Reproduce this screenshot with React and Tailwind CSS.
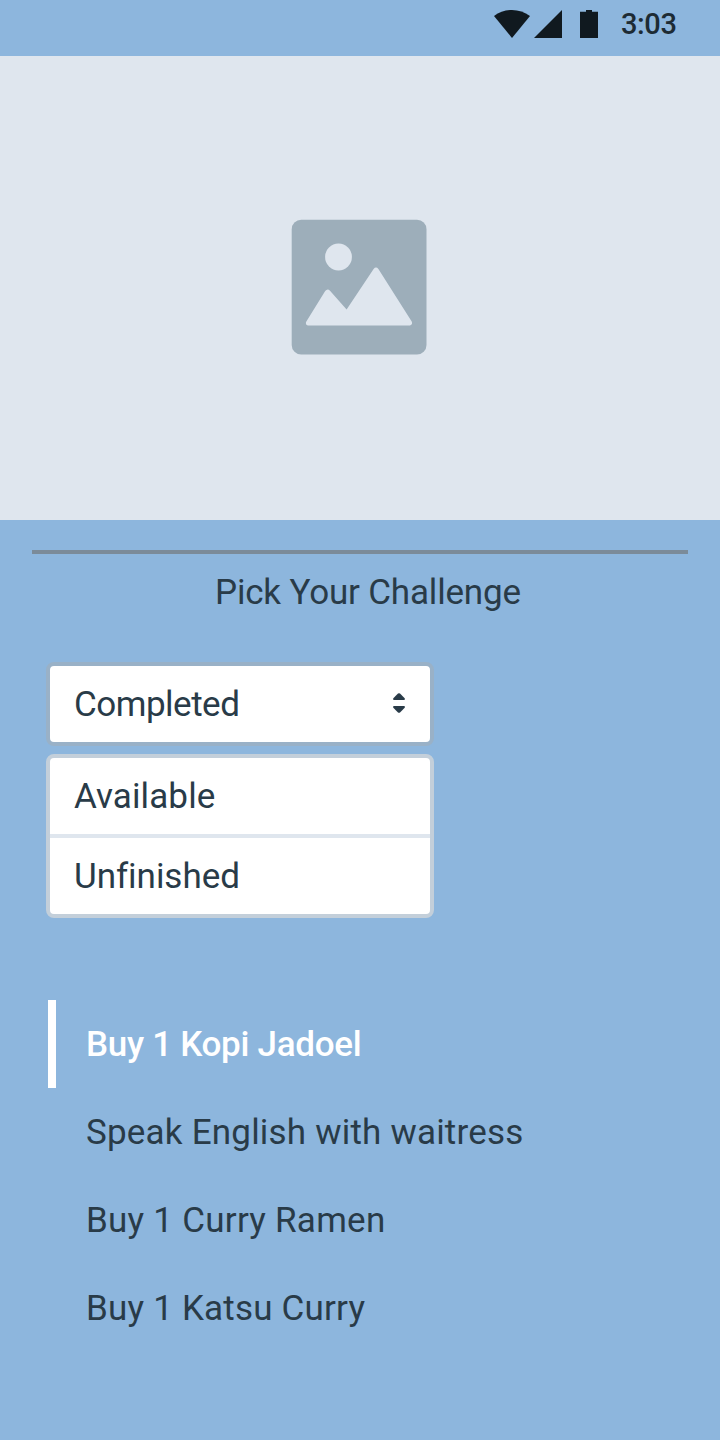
function StatusBar() {
  return (
    <header className="flex h-14 shrink-0 items-center text-[#10191f]">
      <svg className="ml-[492px] h-14 w-[112px] shrink-0" viewBox="492 0 112 56" fill="currentColor">
        <path d="M494 16C504.500 8 519.500 8 530 16L512 38Z" />
        <path d="M562 10V38H534Z" />
        <path d="M586 10H592V11.700H598V38H580V11.700H586Z" />
      </svg>
      <span className="ml-[17px] -mt-2 text-[29px] font-medium leading-10 tracking-[-0.4px] text-[#1d2b34]">3:03</span>
    </header>
  );
}

function ImagePlaceholder() {
  return (
    <div className="h-[464px] shrink-0 bg-[#dfe6ee] pl-[291px] pt-[163px]">
      <svg className="h-[136px] w-[136px]" viewBox="291 219 136 136">
        <rect x="291.700" y="219.700" width="134.800" height="134.800" rx="9.500" fill="#9daeba" />
        <circle cx="338.500" cy="257" r="13.400" fill="#dfe6ee" />
        <path
          d="M308 325.500Q305 324.800 306.200 321.800L325.200 291Q327.500 288 330 290.700L346.600 309.500L373.600 269Q376 266.200 378.400 269L411.700 321.600Q413 324.500 410 325.500Z"
          fill="#dfe6ee"
        />
      </svg>
    </div>
  );
}

function StatusSelect() {
  return (
    <div className="ml-[46px] mt-[45px] w-[388px]">
      <button className="flex h-[84px] w-full items-center justify-between rounded-lg border-4 border-[#99b1c7] bg-white pl-6 pr-[25px]">
        <span className="pt-0.5 tracking-[-0.5px]">Completed</span>
        <svg className="-mt-0.5 h-5 w-3" viewBox="0 0 12 20" fill="currentColor">
          <path d="M5 .6Q6-.3 7 .6L11.700 5.300Q12.300 7 11 7H1Q-.3 7 .3 5.300Z" />
          <path d="M5 19.400Q6 20.300 7 19.400L11.700 14.700Q12.300 13 11 13H1Q-.3 13 .3 14.700Z" />
        </svg>
      </button>
      <ul className="mt-2 rounded-lg border-4 border-[#c3cfda] bg-white">
        <li className="flex h-20 items-center border-b-4 border-[#dfe6ee] pl-6 pt-0.5 tracking-[0.1px]">Available</li>
        <li className="flex h-[76px] items-center pl-6 pt-0.5 tracking-[-0.03px]">Unfinished</li>
      </ul>
    </div>
  );
}

function ChallengeList() {
  return (
    <ul className="ml-12 mt-[82px]">
      <li className="flex h-[88px] items-center border-l-8 border-white pl-[30px] pt-0.5 font-medium tracking-[-0.3px] text-white">Buy 1 Kopi Jadoel</li>
      <li className="flex h-[88px] items-center pl-[38px] pt-0.5 tracking-[0.2px]">Speak English with waitress</li>
      <li className="flex h-[88px] items-center pl-[38px] pt-0.5 tracking-[0.25px]">Buy 1 Curry Ramen</li>
      <li className="flex h-[88px] items-center pl-[38px] pt-0.5 tracking-[0.2px]">Buy 1 Katsu Curry</li>
    </ul>
  );
}

export default function App() {
  return (
    <main className="flex h-[1440px] w-[720px] flex-col overflow-hidden bg-[#8db6dd] font-['Roboto',sans-serif] text-[35px] leading-[48px] text-[#293b48]">
      <StatusBar />
      <ImagePlaceholder />
      <hr className="mx-8 mt-[30px] border-t-4 border-[#7b8b99]" />
      <h1 className="ml-[215px] mt-[15px] whitespace-nowrap tracking-[-0.18px]">Pick Your Challenge</h1>
      <StatusSelect />
      <ChallengeList />
    </main>
  );
}
